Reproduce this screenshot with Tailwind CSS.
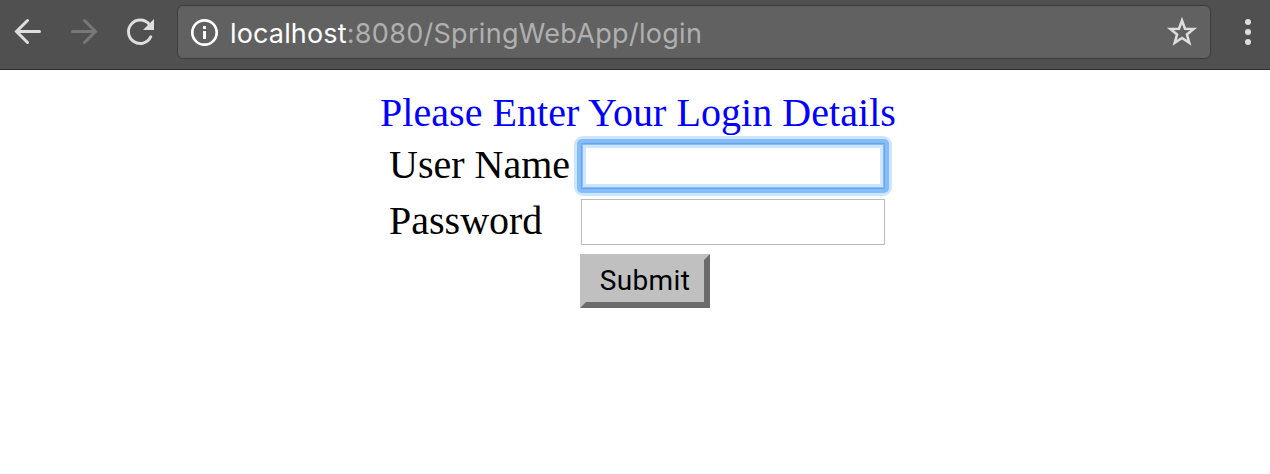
<!DOCTYPE html>
<html lang="en">
<head>
<meta charset="utf-8">
<title>Login</title>
<script src="https://cdn.jsdelivr.net/npm/@tailwindcss/browser@4"></script>
</head>
<body class="h-[474px] w-[1270px] overflow-hidden bg-white">
<header class="flex h-[70px] items-start border-b border-[#2b2b2b] bg-[#505050]">
  <svg class="h-[69px] w-[177px] shrink-0" viewBox="0 0 177 69" fill="none">
    <path d="M39.500 31.500H17M27.500 20.500 16.500 31.500 27.500 42.500" stroke="#dedede" stroke-width="3" stroke-linecap="round"/>
    <path d="M72.500 31.500H95M84.500 20.500 95.500 31.500 84.500 42.500" stroke="#787878" stroke-width="3" stroke-linecap="round"/>
    <path d="M149.200 24.300A11.700 11.700 0 1 0 150.800 36.700" stroke="#dedede" stroke-width="2.900" stroke-linecap="round"/>
    <path d="M154 19V30H143Z" fill="#dedede"/>
  </svg>
  <div class="mt-[5px] flex h-[54px] w-[1034px] items-center rounded-md border border-[#3c3c3c] bg-[#616161]">
    <svg class="ml-3 h-[30px] w-[30px] shrink-0" viewBox="0 0 30 30" fill="none">
      <circle cx="14.500" cy="15.500" r="12.200" stroke="#fff" stroke-width="2.700"/>
      <path d="M13 9h3v3h-3zM13 14h3v8h-3z" fill="#fff"/>
    </svg>
    <div class="ml-[10px] flex-1 whitespace-nowrap pt-[3px] font-['Inter'] text-[27px] leading-[52px] tracking-[0.3px] text-[#b0b0b0]"><span class="tracking-[0.15px] text-white">localhost</span>:8080/SpringWebApp/login</div>
    <svg class="mr-[11px] h-[34px] w-[34px] shrink-0" viewBox="0 0 34 34" fill="none">
      <path d="M17 5.500 20 13.700 28.700 14 21.900 19.400 24.300 27.800 17 23 9.700 27.800 12.100 19.400 5.300 14 14 13.700Z" stroke="#dedede" stroke-width="2.500"/>
    </svg>
  </div>
  <div class="ml-[34px] mt-[19px] flex flex-col gap-1">
    <div class="size-1.5 rounded-full bg-[#dedede]"></div>
    <div class="size-1.5 rounded-full bg-[#dedede]"></div>
    <div class="size-1.5 rounded-full bg-[#dedede]"></div>
  </div>
</header>
<main class="ml-[380px] flex w-[530px] flex-col pt-5 font-['Liberation_Serif'] text-[40px] leading-[46px]">
  <h1 class="whitespace-nowrap tracking-[0.05px] text-[#0000ff]">Please Enter Your Login Details</h1>
  <form class="ml-[9px] mt-[7px] grid grid-cols-[192px_304px] gap-y-[10px]">
    <label class="-mt-px whitespace-nowrap">User Name</label>
    <div class="-m-[7px] h-[60px] w-[318px] rounded-[9px] bg-[#cde5fe] p-[3px]">
      <div class="h-[54px] w-[312px] rounded-[5px] bg-[#85bdfb] p-1">
        <input class="block h-[46px] w-[304px] rounded-none border border-[#6ba5e8] bg-white shadow-[inset_0_0_0_1px_#85bdfb,inset_0_0_0_4px_#cde5fe] outline-none">
      </div>
    </div>
    <label class="-mt-px whitespace-nowrap">Password</label>
    <input type="password" class="h-[46px] w-[304px] rounded-none border border-[#bcbcbc] bg-white outline-none">
    <button type="button" class="col-start-2 -ml-px -mt-px h-[54px] w-[130px] border-6 border-t-[#c0c0c0] border-r-[#6b6b6b] border-b-[#6b6b6b] border-l-[#c0c0c0] bg-[#c0c0c0] font-['Roboto'] text-[28px] leading-[42px] tracking-[0.4px] text-black">Submit</button>
  </form>
</main>
</body>
</html>
